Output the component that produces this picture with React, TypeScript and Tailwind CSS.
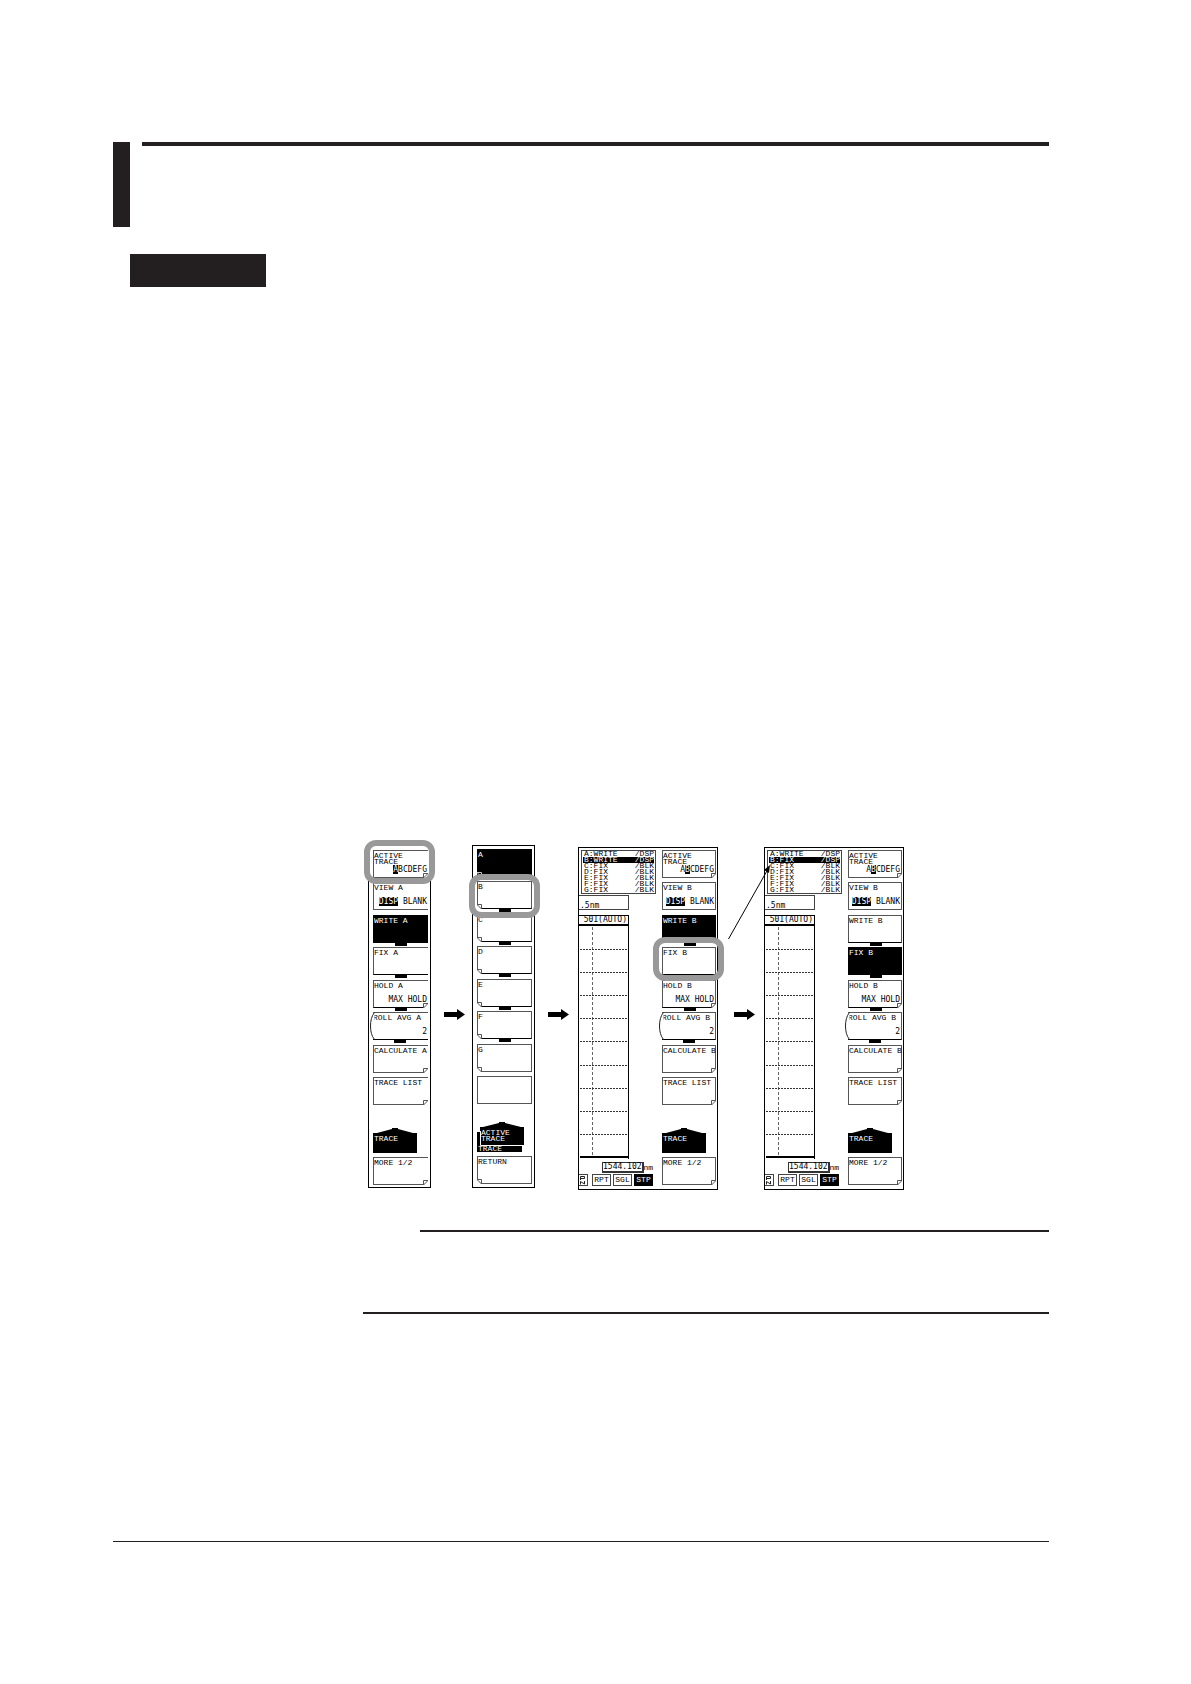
import type { ReactNode } from "react";
import clsx from "clsx";

type KeyDef = {
  label: string[];
  value?: ReactNode;
  fold?: boolean;
  dark?: boolean;
  link?: boolean;
  curved?: boolean;
  ring?: boolean;
};

const Inv = ({ children }: { children: ReactNode }) => (
  <span className="bg-black text-white">{children}</span>
);

const DISP = (
  <>
    <Inv>DISP</Inv> BLANK
  </>
);

const traceKeys = (t: "A" | "B", active: "WRITE" | "FIX", ring?: string): KeyDef[] => [
  {
    label: ["ACTIVE", "TRACE"],
    value: t === "A" ? <><Inv>A</Inv>BCDEFG</> : <>A<Inv>B</Inv>CDEFG</>,
    fold: true,
    ring: ring === "ACTIVE",
  },
  { label: [`VIEW ${t}`], value: DISP },
  { label: [`WRITE ${t}`], dark: active === "WRITE", link: true },
  { label: [`FIX ${t}`], dark: active === "FIX", link: true, ring: ring === "FIX" },
  { label: [`HOLD ${t}`], value: "MAX HOLD", fold: true, link: true },
  { label: [`ROLL AVG ${t}`], value: "2", curved: true, link: true },
  { label: [`CALCULATE ${t}`], fold: true },
  { label: ["TRACE LIST"], fold: true },
];

const SELECT_KEYS: KeyDef[] = [
  { label: ["A"], dark: true, fold: true },
  { label: ["B"], fold: true, link: true, ring: true },
  { label: ["C"], fold: true, link: true },
  { label: ["D"], fold: true, link: true },
  { label: ["E"], fold: true, link: true },
  { label: ["F"], fold: true, link: true },
  { label: ["G"], fold: true },
  { label: [""] },
];

const GRID_ROWS = [23, 46, 69, 92, 115, 139, 162, 185, 208];

function SoftKey({ k, side = "right", open }: { k: KeyDef; side?: "left" | "right"; open?: boolean }) {
  return (
    <button
      type="button"
      aria-label={k.label.join(" ") || "blank"}
      className={clsx(
        "relative flex h-7 w-full shrink-0 flex-col justify-between border border-[#555] pt-[2px] pb-[3px] text-left",
        k.dark ? "border-black bg-black text-white" : "bg-white",
        k.curved && "border-l-0 border-b-black",
        k.link && "border-b-black",
        k.ring && "z-10",
        open && "border-r-0",
      )}
    >
      <span className="block leading-[6px]">
        {k.label.map((l) => (
          <span key={l} className="block whitespace-pre">
            {l}
          </span>
        ))}
      </span>
      {k.value && (
        <span className="block self-end pr-px whitespace-pre font-['DejaVu_Sans_Mono',monospace] leading-[9px]">
          {k.value}
        </span>
      )}
      {k.fold && (
        <svg
          viewBox="0 0 5 5"
          className={clsx(
            "absolute -bottom-px h-[5px] w-[5px]",
            side === "left" ? "-left-px -scale-x-100" : open ? "right-0" : "-right-px",
          )}
        >
          <path d="M5 0V5H0Z" fill={k.dark ? "#000" : "#fff"} />
          <path d="M.5 5V.5H5L.5 5" fill="none" stroke={k.dark ? "#ccc" : "#555"} strokeWidth="1" />
        </svg>
      )}
      {k.curved && (
        <svg viewBox="0 0 5 28" className="absolute -top-px -left-[3px] h-7 w-[5px]">
          <path d="M4.500 .5C1.500 4 .5 9 .5 14S1.500 24 4.500 27.500" fill="#fff" stroke="#222" />
        </svg>
      )}
      {k.link && <span className="absolute top-full left-[21px] h-1 w-3 bg-black" />}
      {k.ring && (
        <span
          className={clsx(
            "absolute h-11 w-[71px] rounded-xl border-[6px] border-[#999]",
            side === "left" ? "-top-2 -left-[9px]" : "-top-[11px] -left-[10px]",
          )}
        />
      )}
    </button>
  );
}

function KeyStack({ keys, side, open }: { keys: KeyDef[]; side?: "left" | "right"; open?: boolean }) {
  return (
    <div className="flex h-[255px] flex-col justify-between">
      {keys.map((k, i) => (
        <SoftKey key={i} k={k} side={side} open={open} />
      ))}
    </div>
  );
}

function TraceMenu({ keys, open }: { keys: KeyDef[]; open?: boolean }) {
  return (
    <div>
      <KeyStack keys={keys} open={open} />
      <svg viewBox="0 0 44 25" className="mt-[23px] mb-1 h-[25px] w-[44px]">
        <path d="M0 5H4L19 1V0H25V1L40 5H44V25H0Z" />
        <text x="1" y="13" fill="#fff">TRACE</text>
      </svg>
      <SoftKey k={{ label: ["MORE 1/2"], fold: true }} open={open} />
    </div>
  );
}

function SelectMenu() {
  return (
    <div>
      <KeyStack keys={SELECT_KEYS} side="left" />
      <svg viewBox="0 0 48 30" className="mt-[18px] mb-1 h-[30px] w-[48px]">
        <path d="M0 10H45V30H0Z" />
        <path d="M3 5H6L22 1V0H28V1L44 5H47V23.500H3Z" />
        <path d="M3.500 9V23.500H47" fill="none" stroke="#fff" />
        <text x="4" y="13" fill="#fff">ACTIVE</text>
        <text x="4" y="19" fill="#fff">TRACE</text>
        <text x="1" y="29" fill="#fff">TRACE</text>
      </svg>
      <SoftKey k={{ label: ["RETURN"], fold: true }} side="left" />
    </div>
  );
}

function Graticule() {
  return (
    <svg viewBox="0 0 50 233" className="h-[233px] w-[50px]" stroke="#000" shapeRendering="crispEdges">
      <path d="M13.500 1V230" stroke="#666" strokeDasharray="3 2" />
      {GRID_ROWS.map((y) => (
        <path key={y} d={`M1 ${y + 0.5}H48`} stroke="#333" strokeDasharray="2 1" />
      ))}
      <path d="M49.500 0V233" />
      <path d="M1 231H49" strokeWidth="2" />
    </svg>
  );
}

function Screen({ b, keys }: { b: string; keys: KeyDef[] }) {
  const rows = ["A:WRITE", `B:${b}`, "C:FIX", "D:FIX", "E:FIX", "F:FIX", "G:FIX"];
  return (
    <div className="relative mt-[2px] flex h-[343px] w-[140px] shrink-0 justify-between border border-black pt-[2px] pr-px">
      <div className="flex w-[77px] flex-col">
        <ul className="ml-[2px] h-11 border border-[#444] px-px leading-[6px]">
          {rows.map((r, i) => (
            <li key={r} className={clsx("flex justify-between pl-px", i === 1 && "bg-black text-white")}>
              <span>{r}</span>
              <span>{i < 2 ? "/DSP" : "/BLK"}</span>
            </li>
          ))}
        </ul>
        <div className="mt-px h-[15px] w-[50px] border border-l-0 border-[#444] pt-[5px] pl-px font-['DejaVu_Sans_Mono',monospace] leading-[9px]">
          .5nm
        </div>
        <div className="mt-[5px] h-[11px] w-[50px] border-y border-r border-b-2 border-black pr-px text-right font-['DejaVu_Sans_Mono',monospace] leading-[8px]">
          501(AUTO)
        </div>
        <Graticule />
        <div className="mt-[3px] ml-[23px] flex items-center leading-[8px]">
          <span className="border border-r-2 border-b-2 border-[#333] font-['DejaVu_Sans_Mono',monospace]">1544.102</span>
          <span>nm</span>
        </div>
        <div className="mt-px flex h-3 gap-[2px] leading-[10px]">
          <button type="button" aria-label="PZ" className="mr-[2px] w-[9px] border border-l-0 border-[#444]">
            <svg viewBox="0 0 7 10" className="h-[10px] w-[7px]" fill="none" stroke="#222">
              <path d="M1.500 5V1.500H5.500V3.500H1.500M1.500 9.500V6.500L5.500 9V6" />
            </svg>
          </button>
          <button type="button" className="w-[19px] border border-[#444]">RPT</button>
          <button type="button" className="w-[19px] border border-[#444]">SGL</button>
          <button type="button" className="w-[19px] bg-black text-white">STP</button>
        </div>
      </div>
      <div className="w-[54px]">
        <TraceMenu keys={keys} />
      </div>
    </div>
  );
}

function Arrow() {
  return (
    <svg viewBox="0 0 21 11" className="mt-[164px] h-[11px] w-[21px] shrink-0">
      <path d="M0 3H13V0L21 5.500L13 11V8H0Z" />
    </svg>
  );
}

export default function App() {
  return (
    <main className="min-h-screen bg-white pt-[142px] pr-[142px] pb-[142px] pl-[113px]">
      <header>
        <div className="flex gap-3">
          <div className="h-[85px] w-[17px] bg-[#231f20]" />
          <div className="h-1 flex-1 bg-[#231f20]" />
        </div>
        <div className="mt-[27px] ml-[17px] h-[33px] w-[136px] bg-[#231f20]" />
      </header>

      <figure className="mt-[558px] ml-[255px] flex items-start font-['Liberation_Mono',monospace] text-[8px] text-black">
        <div className="h-[343px] w-[63px] shrink-0 border border-black pt-1 pr-[2px] pl-1">
          <TraceMenu keys={traceKeys("A", "WRITE", "ACTIVE")} open />
        </div>
        <div className="w-[41px] shrink-0 pl-[13px]">
          <Arrow />
        </div>
        <div className="h-[343px] w-[63px] shrink-0 border border-black px-1 pt-[3px] pr-[2px]">
          <SelectMenu />
        </div>
        <div className="w-[43px] shrink-0 pl-[13px]">
          <Arrow />
        </div>
        <Screen b="WRITE" keys={traceKeys("B", "WRITE", "FIX")} />
        <div className="relative w-[46px] shrink-0 pl-4">
          <Arrow />
          <svg viewBox="0 0 46 78" className="absolute top-[18px] left-[9px] z-20 h-[78px] w-[46px]">
            <path d="M1.500 76L41 6" stroke="#000" fill="none" />
            <path d="M43 2L42 10L37 7Z" />
          </svg>
        </div>
        <Screen b="FIX" keys={traceKeys("B", "FIX")} />
      </figure>

      <div className="mt-10 ml-[307px] h-[2px] bg-[#231f20]" />
      <div className="mt-20 ml-[250px] h-[2px] bg-[#231f20]" />
      <div className="mt-[227px] h-px bg-[#231f20]" />
    </main>
  );
}
